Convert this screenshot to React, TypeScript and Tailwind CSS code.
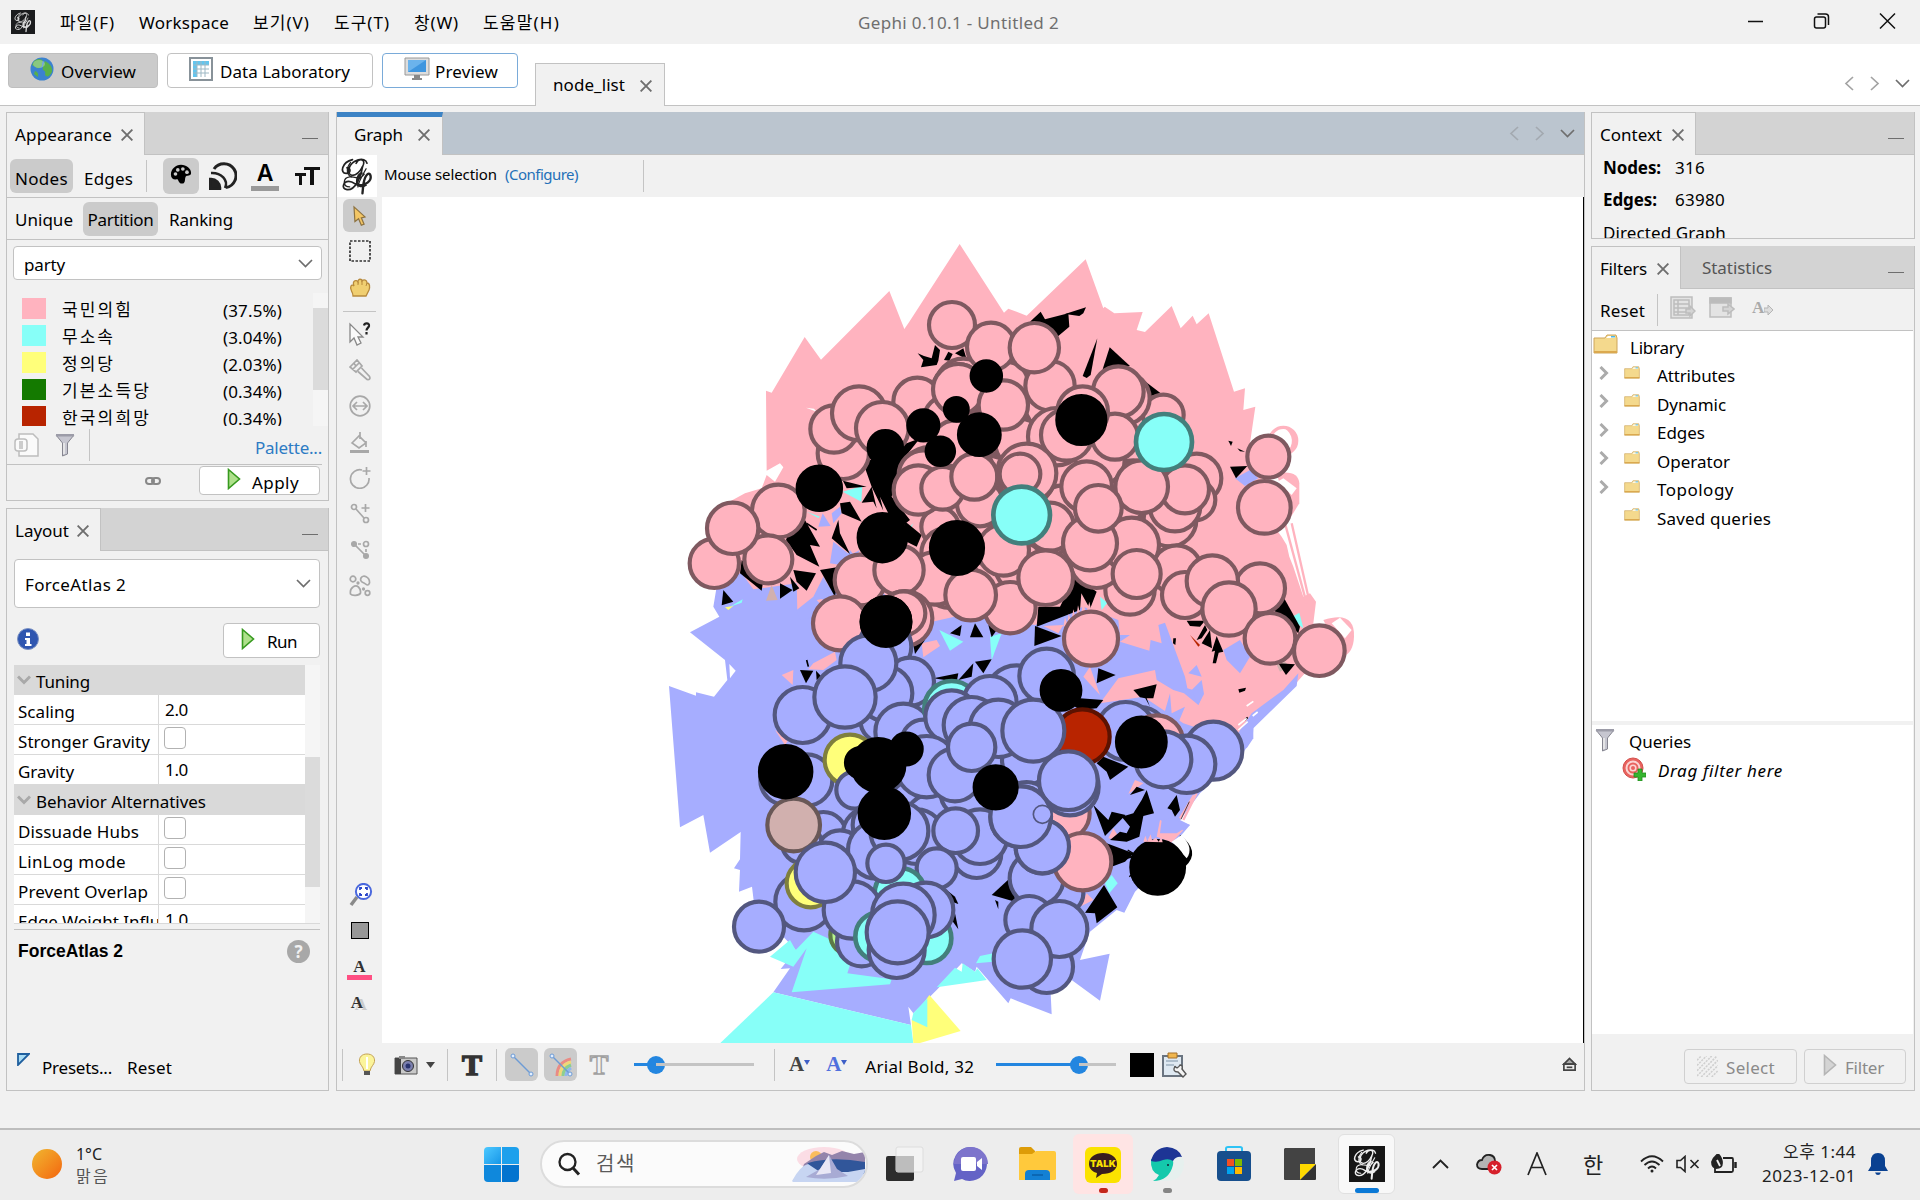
import { useLayoutEffect, useRef, useState } from "react";
import type { ReactNode } from "react";

type TProps = { w?: number; children: string; className?: string };

/* Text run that spreads its letters to occupy a fixed width. */
function T({ w, children, className = "" }: TProps) {
  const ref = useRef<HTMLSpanElement>(null);
  const [ls, setLs] = useState(0);
  useLayoutEffect(() => {
    if (!ref.current || !w) return;
    ref.current.style.letterSpacing = "0px";
    const natural = ref.current.getBoundingClientRect().width;
    setLs((w - natural) / children.length);
    ref.current.style.letterSpacing = `${(w - natural) / children.length}px`;
  }, [w, children]);
  return (
    <span ref={ref} className={`inline-block shrink-0 whitespace-pre leading-[22px] ${className}`} style={{ letterSpacing: `${ls}px` }}>
      {children}
    </span>
  );
}

const P = "#ffb3bf";
const L = "#a6adff";
const C = "#87fff8";
const Y = "#ffff7a";

const darker: Record<string, string> = {
  [P]: "#7f5960",
  [L]: "#53577f",
  [C]: "#437f7c",
  [Y]: "#7f7f3d",
  "#b82400": "#5c1200",
  "#d1b0ae": "#695857",
  "#b8f58f": "#5c7a47",
  "#000": "#000",
};

type N = [number, number, number, string];

const backNodes: N[] = [
  [1060, 600, 90, P], [1090, 620, 70, P], [1010, 600, 80, P], [1110, 640, 80, P], [1175, 900, 95, P], [1190, 880, 80, P],
  [1450, 780, 95, P], [1410, 800, 90, P], [1380, 760, 80, P], [1240, 850, 90, P], [950, 720, 85, P], [840, 745, 100, P],
  [1000, 1010, 80, P], [1110, 1010, 80, P], [940, 470, 90, P], [1070, 460, 70, P], [1350, 690, 80, P], [1130, 740, 90, P],
  [900, 1050, 90, P], [780, 1160, 65, P],
];

const pinkNodes: N[] = [
  [906, 285, 75, P], [925, 478, 82, P], [802, 515, 78, P], [895, 570, 80, P], [925, 478, 82, P], [1060, 525, 80, P],
  [1200, 467, 80, P], [1023, 350, 78, P], [1153, 353, 80, P], [580, 670, 83, P], [552, 597, 77, P], [627, 550, 87, P], [697, 595, 85, P],
  [915, 640, 75, P], [385, 843, 85, P], [193, 1000, 80, P], [355, 988, 78, P], [248, 895, 83, P],
  [870, 890, 62, P], [820, 735, 80, P], [990, 820, 75, P], [805, 780, 80, P], [878, 775, 70, P], [973, 740, 75, P],
  [890, 970, 82, P], [855, 1045, 85, P], [1060, 960, 83, P], [630, 1050, 82, P], [747, 1020, 80, P], [765, 1165, 88, P], [760, 1150, 72, P],
  [1080, 1133, 83, P], [962, 1095, 82, P], [570, 1180, 87, P],
  [1540, 555, 67, P], [1420, 505, 85, P], [1405, 485, 82, P], [1395, 620, 75, P], [1298, 545, 82, P], [1220, 620, 92, P],
  [1250, 615, 83, P], [1130, 730, 95, P], [1110, 732, 67, P], [1200, 890, 78, P], [1310, 770, 82, P], [1640, 745, 80, P], [1560, 870, 85, P],
  [1635, 810, 67, P], [1575, 828, 82, P], [1605, 778, 78, P], [1475, 770, 85, P],
  [1440, 1080, 80, P], [1580, 1020, 80, P], [1605, 1095, 75, P], [1340, 995, 85, P], [1445, 945, 88, P], [1320, 940, 87, P],
  [1345, 835, 76, P], [1460, 1032, 78, P], [1187, 1043, 88, P], [1830, 1075, 81, P], [1687, 1053, 83, P], [1737, 1137, 86, P],
  [1860, 1225, 82, P], [2008, 1262, 82, P], [1323, 1226, 87, P], [1855, 680, 69, P], [1843, 832, 85, P],
  [1542, 636, 90, C], [1115, 855, 91, C],
];

const pinkBlack: N[] = [
  [1009, 438, 50, "#000"], [919, 538, 40, "#000"], [820, 586, 51, "#000"], [871, 664, 47, "#000"], [988, 614, 67, "#000"],
  [706, 653, 56, "#000"], [508, 775, 71, "#000"], [697, 923, 77, "#000"], [921, 954, 84, "#000"], [708, 1175, 79, "#000"],
  [1294, 570, 78, "#000"],
];

/* Lower half of the network, in a frame that starts 390 px below the upper one. */
const blueNodes: N[] = [
  [705, 80, 85, L], [800, 560, 90, L], [900, 560, 85, L], [850, 610, 95, L], [1080, 500, 120, L], [1130, 420, 80, L], [1130, 560, 80, L],
  [980, 700, 80, L], [700, 300, 75, L],
  [780, 185, 78, L], [705, 220, 88, L], [655, 130, 90, L], [458, 285, 90, L], [585, 231, 98, L], [760, 335, 90, L], [820, 365, 72, L],
  [905, 265, 88, C], [1100, 230, 100, L], [1020, 248, 86, L], [905, 290, 85, L], [965, 315, 90, L], [1045, 325, 92, L], [830, 440, 98, L],
  [950, 515, 85, L], [915, 465, 85, L], [965, 382, 77, L],
  [405, 480, 80, L], [470, 480, 83, L], [600, 420, 82, Y], [615, 510, 62, L],
  [520, 645, 75, L], [655, 640, 82, L], [690, 615, 88, L], [570, 700, 75, L], [680, 690, 92, L], [800, 650, 88, L], [748, 633, 93, L],
  [990, 650, 88, L], [917, 632, 73, L], [860, 745, 66, L], [455, 670, 65, L], [431, 615, 85, "#d1b0ae"],
  [462, 845, 92, L], [482, 790, 78, Y], [750, 820, 82, C], [600, 945, 65, "#b8f58f"], [635, 965, 80, L], [607, 870, 92, L],
  [690, 950, 80, C], [830, 955, 80, C], [708, 730, 62, L],
  [526, 757, 95, L], [828, 870, 88, L], [740, 990, 90, L], [760, 885, 100, L], [743, 937, 99, L],
  [327, 920, 81, L],
  [1190, 168, 88, L], [1240, 580, 85, P], [1260, 500, 92, L],
  [1470, 345, 90, L], [1427, 333, 93, L], [1297, 350, 88, "#b82400"], [1150, 332, 99, L],
  [1520, 365, 85, P], [1690, 392, 93, L], [1610, 433, 92, L], [1540, 418, 90, L],
  [1112, 590, 97, L], [1240, 820, 66, L], [1160, 775, 87, L], [1177, 680, 86, L], [1298, 725, 92, P], [1177, 680, 86, L], [1255, 482, 94, L], [1112, 590, 97, L],
  [1138, 900, 78, L], [1190, 1040, 85, L], [1228, 927, 90, L], [1117, 1017, 92, L],
  [407, 455, 83, "#000"], [632, 428, 50, "#000"], [685, 435, 84, "#000"], [769, 387, 52, "#000"], [703, 580, 80, "#000"],
  [1037, 502, 69, "#000"], [1233, 211, 64, "#000"], [1474, 366, 79, "#000"], [1523, 742, 85, "#000"],
];

function Nodes({ list }: { list: N[] }) {
  return (
    <>
      {list.map(([x, y, r, c], i) => (
        <circle key={i} cx={x} cy={y} r={r - 6} fill={c} stroke={darker[c]} strokeWidth={c === C ? 14 : 12.5} />
      ))}
    </>
  );
}

const blackTris = [
  // upper fringe
  "803,370 822,378 845,385 855,345 870,360 865,392 860,405 813,412 820,390", "882,390 895,365 908,372 898,392", "915,370 940,355 950,388",
  "1140,275 1172,245 1185,268 1255,250 1258,290 1225,318 1180,280", "1245,252 1308,232 1300,250 1288,258", "1342,325 1322,435 1310,444 1298,438",
  "1379,352 1440,408 1358,418", "1480,450 1535,492 1500,498", "1735,632 1748,635 1743,648", "1762,655 1785,665 1770,664", "1740,710 1792,708 1758,745",
  // dark mass around the left nodes
  "640,700 770,640 810,625 750,700 725,800 780,870 740,900 690,800 700,842 665,770", "570,750 650,770 590,775 575,745",
  "570,820 600,815 635,875 575,850", "635,818 665,770 680,835 670,815", "440,840 465,870 510,950 480,945 508,1010 440,975 408,930",
  "545,925 565,870 570,910 600,972", "275,990 340,1050 335,1082 270,1030", "430,1020 498,1030 470,1082 440,1055", "510,1020 570,1010 555,1100",
  "760,870 815,915 800,950 770,935", "220,1080 250,1115 215,1126", "390,1060 428,1080 390,1106", "420,1040 448,1075 430,1085",
  // centre
  "1275,1040 1340,1085 1320,1137 1294,1090 1290,1140 1160,1190 1165,1130 1230,1130", "1155,1188 1235,1218 1153,1248",
  "1610,1172 1665,1172 1650,1190 1620,1188", "1640,1230 1665,1185 1672,1200 1655,1225", "1655,1240 1680,1200 1686,1255", "1700,1218 1720,1265 1706,1268 1698,1300 1688,1300 1695,1262 1685,1265",
  "1570,1225 1578,1225 1576,1245 1569,1240", "1900,1100 1950,1190 1945,1210 1870,1140", "1885,1300 1935,1303 1908,1335",
  "1345,1315 1397,1335 1340,1360", "1450,1380 1520,1363 1510,1405 1490,1405 1500,1430 1486,1405 1470,1402", "1765,1378 1788,1373 1785,1382 1768,1388",
  "900,1210 935,1185 930,1218", "975,1180 1000,1222 960,1222", "1015,1185 1040,1200 1025,1222", "850,1345 925,1330 920,1355", "925,1350 970,1300 965,1340", "975,1295 1025,1288 1000,1330",
  "450,1320 490,1322 468,1360", "498,1322 515,1340 500,1350", "790,1245 825,1230 795,1272",
];
const lowBlack = [
  "1230,230 1360,240 1340,265 1290,270", "1340,430 1360,410 1435,440 1380,480 1370,455", "1440,525 1460,500 1485,510",
  "1475,540 1490,510 1512,580 1480,588 1468,650 1430,665 1380,660 1410,635 1430,640 1440,620 1415,590 1450,580",
  "1330,555 1375,600 1385,575 1427,585 1365,648", "1350,700 1370,670 1450,700 1425,725 1385,740", "1305,878 1362,795 1402,862 1340,910 1335,880",
  "1025,825 1090,765 1095,845", "1250,625 1275,615 1270,640", "890,810 915,830 925,852 905,845", "905,900 915,880 925,928", "1552,565 1580,525 1590,570 1575,590 1565,570", "1035,840 1045,845 1045,868",
];
const paleBits: [string, string][] = [
  [C, "578,785 637,768 634,815"], [C, "470,845 510,860 505,864"], [C, "770,900 790,880 780,900"], [C, "1350,1100 1372,1118 1355,1140"],
  [C, "868,1200 940,1235 900,1262"], [C, "1020,1220 1055,1210 1025,1290"], [C, "1920,1165 1948,1148 1960,1195"],
  [L, "505,890 518,850 542,888"], [L, "545,850 570,830 575,850 550,880"], [L, "550,935 600,975 630,960 600,1010 540,1000"], [L, "1755,745 1800,720 1825,745 1785,768"],
  [L, "520,1040 555,1100 500,1110 535,1150 450,1170 440,1140 490,1100"], ["#d1b0ae", "365,1065 383,1110 348,1112"], [Y, "225,1132 250,1128 235,1140"], [C, "240,1130 278,1108 275,1118"],
  [P, "490,1300 555,1265 560,1290 520,1320 475,1318"], [P, "395,1335 430,1320 428,1365"], [P, "815,1240 860,1230 870,1248 820,1282"], [P, "375,1500 415,1530 405,1545"],
  [P, "1180,1188 1240,1185 1225,1210"], [P, "1320,1310 1350,1395 1300,1340"], ["#b82400", "1620,1215 1650,1245 1645,1250"], ["#d1b0ae", "1880,1305 1900,1290 1920,1310 1890,1325"],
];
const lowBits: [string, string][] = [
  [C, "1365,790 1385,765 1403,790 1378,820"], [P, "1435,522 1455,480 1480,490"], [P, "1520,650 1530,600 1600,630 1565,668"], [P, "1375,655 1390,625 1412,660"], [P, "1290,860 1310,820 1330,840"],
  [L, "1530,640 1535,600 1560,595 1620,615 1580,640"], [L, "1615,160 1640,135 1655,170"], [L, "1625,210 1655,180 1662,222 1645,255"], [L, "1540,290 1560,220 1565,280 1605,260 1580,320"],
  [L, "1720,90 1770,60 1800,110 1770,160 1730,120"],
];

function Network() {
  return (
    <svg className="block h-full w-full" viewBox="382 197 1201 846" preserveAspectRatio="none">
      <g transform="translate(650 230) scale(0.333333)">
        <polygon fill={P} points="348,482 365,488 464,321 513,389 718,183 763,297 778,275 929,42 1062,248 1075,236 1130,257 1307,88 1360,235 1364,230 1393,250 1478,246 1460,300 1485,306 1565,228 1592,295 1628,257 1640,283 1676,250 1752,485 1785,475 1780,540 1816,530 1800,640 1830,720 1880,900 1895,920 1910,945 1918,980 1930,1010 1960,1100 1980,1090 1998,1115 1990,1180 2000,1290 1920,1380 1770,1520 1650,1660 1590,1770 1560,1840 700,1500 300,1080 180,960 230,820 285,790 335,775 350,735 375,755 400,712 390,700 350,722" />
        <polygon fill="#fff" points="468,533 492,536 500,545" />
        <path d="M1905 880L1970 1120M1925 880L1975 1100" stroke={P} strokeWidth="7" />
        <circle cx="1900" cy="632" r="40" fill="#fff" stroke={P} strokeWidth="10" />
        <path d="M1895 592a40 40 0 0 1 30 72l-8-6a42 42 0 0 0-22-66" fill={P} />
        <path d="M1880 730q65-12 68 30v60l-25 40-20-50z" fill={P} />
        <polygon fill="#fff" points="1882,755 1900,745 1940,775 1925,795" />
        <path d="M2020 1170q95-30 92 50q-2 50-35 60z" fill={P} />
        <polygon fill="#fff" points="2045,1180 2070,1163 2105,1200 2085,1225" />
        <polygon fill={L} points="205,1040 275,1030 310,1078 440,1060 442,1143 500,1140 600,960 780,1190 960,1150 1155,1185 1300,1130 1405,1170 1410,1215 1440,1215 1410,1235 1498,1262 1502,1230 1535,1240 1525,1185 1545,1178 1605,1340 1612,1375 1660,1390 1645,1425 1602,1390 1570,1380 1520,1350 1515,1320 1405,1345 1350,1420 1480,1400 1600,1480 1750,1530 1805,1450 1900,1380 1945,1330 1940,1368 1810,1495 1808,1525 1785,1560 1650,1690 1590,1770 1620,1785 1590,1820 1530,1910 1455,1985 1423,2048 1400,2040 1320,2105 1302,2155 1290,2190 1379,2171 1350,2312 1265,2250 1202,2290 1205,2353 1082,2305 1075,2320 980,2210 975,2225 935,2200 860,2280 790,2350 775,2330 783,2385 370,2287 420,2215 392,2217 437,2160 400,2120 312,2020 306,1970 267,1985 270,1920 252,1915 270,1888 272,1806 180,1868 160,1755 90,1792 57,1368 138,1397 138,1387 192,1400 232,1350 225,1290 120,1207 208,1160 190,1130" />
        <polygon fill="#fff" points="238,1302 257,1322 240,1345" />
        {paleBits.map(([c, p]) => <polygon key={p} points={p} fill={c} />)}
        {blackTris.map((p) => <polygon key={p} points={p} />)}
        <path d="M1240 1190l5-28 7 20 4-30 8 22 6-36 8 30 6-42 8 30 8-40 8 35 10-36 8 36" fill={P} />
        <path d="M470 880l30 20M470 1290l5 20M1785 1470l8-8" stroke="#000" strokeWidth="5" />
      </g>
      <g transform="translate(650 620) scale(0.333333)">
        <polygon fill={C} points="210,1270 370,1117 783,1215 790,1270" />
        <polygon fill={C} points="425,1117 470,985 430,1040 360,1010 420,960 437,990 490,935 545,960 600,1035 592,1060 725,1078 720,1093" />
        <polygon fill={C} points="860,1102 915,1043 935,1055 938,1030 975,1055 982,1045 1010,1080 975,1085" />
        <polygon fill={C} points="978,1030 990,1008 1030,1000 1030,1025" />
        <polygon fill={Y} points="785,1200 838,1125 932,1233 800,1272 790,1270" />
        <polygon fill={C} points="790,1180 832,1135 832,1222 785,1200" />
        <path d="M1765 315l25-20M1765 330l28-25M1790 258l20-14M1808 288l15-12" stroke="#fff" strokeWidth="5" />
        <path d="M1600 600L1640 520M1590 595L1632 525" stroke={P} strokeWidth="7" />
        <path d="M1593 598L1618 545" stroke="#000" strokeWidth="2" />
        {lowBits.map(([c, p]) => <polygon key={p} points={p} fill={c} />)}
        {lowBlack.map((p) => <polygon key={p} points={p} />)}
        <path d="M1590 645q65 50 15 95l-25-35z" fill="#000" />
        <path d="M1565 665l30-20q38 40 15 70z" fill="#fff" />
        <polygon fill={L} points="1800,330 1810,320 1810,355 1790,385 1780,380" />
      </g>
      <g transform="translate(650 230) scale(0.333333)">
        <Nodes list={backNodes} />
        <Nodes list={pinkNodes} />
        <Nodes list={pinkBlack} />
      </g>
      <g transform="translate(650 620) scale(0.333333)">
        <Nodes list={blueNodes} />
        <circle cx="1177" cy="583" r="27" fill={L} stroke="#53577f" strokeWidth="5" />
        <path d="M1430 715l20-5-22-5 25-3-20-12M1438 770l15-15-4 22 15-15" stroke="#000" strokeWidth="4" fill="none" />
        <path d="M1480 665l6-18 6 16 10-20 4 18 12-8 8 12 8-14 4 16" fill={P} />
      </g>
      <g transform="translate(650 230) scale(0.333333)">
        <Nodes list={[[708, 1175, 79, "#000"]]} />
      </g>
    </svg>
  );
}

function GephiMark({ color, className }: { color: string; className: string }) {
  return (
    <svg viewBox="0 0 40 44" className={className} fill="none" stroke={color} strokeLinecap="round">
      <path d="M31 8C29 0 14 4 11 14C9 23 19 25 26 12C31 3 22 2 19 8" strokeWidth="1.8" />
      <path d="M15 4C3 7 1 19 8 19C14 19 13 12 9 13M26 12C24 24 18 38 9 37C2 36 5 28 11 28C18 28 22 37 30 32" strokeWidth="1.9" />
      <path d="M30 14C26 21 21 30 21 34M12 34C4 34 4 24 12 23C20 22 22 28 28 20" strokeWidth="1.4" />
      <path d="M25 19C20 21 18 31 23 32C29 32 36 28 35 22C34 17 29 19 27 31L26 41" strokeWidth="2.6" />
      <path d="M13 7C8 13 8 21 14 23" strokeWidth="1.3" />
    </svg>
  );
}

function X({ className = "" }: { className?: string }) {
  return (
    <svg viewBox="0 0 12 12" className={`h-3 w-3 shrink-0 ${className}`} stroke="#6e6e6e" strokeWidth="1.9">
      <path d="M.6 .6L11.4 11.4M11.4 .6L.6 11.4" />
    </svg>
  );
}

function Chevron({ d, color = "#6e6e6e", className = "" }: { d: "left" | "right" | "down"; color?: string; className?: string }) {
  const path = d === "left" ? "M11 2L4 8.500L11 15" : d === "right" ? "M5 2L12 8.500L5 15" : "M2 5L8.500 11.500L15 5";
  return (
    <svg viewBox="0 0 17 17" className={`h-[17px] w-[17px] shrink-0 ${className}`} fill="none" stroke={color} strokeWidth="1.7">
      <path d={path} />
    </svg>
  );
}

function Play({ gray = false, className = "" }: { gray?: boolean; className?: string }) {
  return (
    <svg viewBox="0 0 14 22" className={`h-[22px] w-3.5 shrink-0 ${className}`}>
      <path d="M1.500 1.500L12.500 11L1.500 20.500z" fill={gray ? "#d4d4d4" : "#aee08b"} stroke={gray ? "#b5b5b5" : "#379a1f"} strokeWidth="1.6" />
    </svg>
  );
}

function Folder({ className }: { className: string }) {
  return (
    <svg viewBox="0 0 25 20" className={className}>
      <path d="M1 4H12L14 1H23L24 4V19H1z" fill="#f4d98d" stroke="#cda55a" />
      <path d="M13 4L15 2H22V4z" fill="#fff" />
      <path d="M18 2h4v1.500h-4z" fill="#4bb8e8" />
      <path d="M1 17h23v2H1z" fill="#dba94f" />
    </svg>
  );
}

function Funnel({ className }: { className: string }) {
  return (
    <svg viewBox="0 0 20 24" className={className}>
      <path d="M1 2H19L12.500 10V21L7.500 23V10z" fill="#c6c6d0" stroke="#858590" />
      <path d="M1 1h18v2.500H1z" fill="#9c9ca8" />
      <path d="M9 10v11" stroke="#eee" strokeWidth="1.5" />
    </svg>
  );
}

const Sep = ({ className = "" }: { className?: string }) => <div className={`h-8 w-px shrink-0 bg-[#c4c4c4] ${className}`} />;

function PanelHead({ title, w, tab, rest, gap }: { title: string; w: number; tab: string; rest?: ReactNode; gap: string }) {
  return (
    <div className="flex h-[43px] shrink-0">
      <div className={`flex shrink-0 items-center border-r border-t border-[#c2c2c2] pl-2 ${tab} ${gap}`}>
        <T w={w} className="mt-px">{title}</T>
        <X className="mt-px" />
      </div>
      <div className="flex flex-1 items-center border-b border-[#c2c2c2] bg-[#d3d3d3]">
        {rest}
        <div className="ml-auto mr-[10px] mt-[11px] h-px w-4 bg-[#6e6e6e]" />
      </div>
    </div>
  );
}

const parties: [string, string, number, string][] = [
  ["bg-[#ffb3bf]", "국민의힘", 71, "(37.5%)"],
  ["bg-[#87fff8]", "무소속", 53, "(3.04%)"],
  ["bg-[#ffff7a]", "정의당", 53, "(2.03%)"],
  ["bg-[#147a00]", "기본소득당", 89, "(0.34%)"],
  ["bg-[#b82400]", "한국의희망", 89, "(0.34%)"],
];

function Appearance() {
  return (
    <section className="flex h-[389px] flex-col border border-t-0 border-[#c2c2c2]">
      <PanelHead title="Appearance" w={97} tab="w-[138px]" gap="gap-[9px]" />
      <div className="flex h-[43px] shrink-0 items-center border-b border-[#c2c2c2] pl-[3px]">
        <div className="flex h-[34px] w-[63px] items-center justify-center rounded-md bg-[#cbcbcb]"><T w={53} className="mt-1.5">Nodes</T></div>
        <T w={49} className="ml-[11px] mt-1.5">Edges</T>
        <Sep className="ml-[13px] mr-4" />
        <div className="flex h-9 w-9 items-center justify-center rounded-md bg-[#cbcbcb]">
          <svg viewBox="0 0 24 24" className="mb-1 h-[22px] w-[22px]"><path d="M12 2C6 2 1 7 1 12.500C1 16 3 18 6 18C8 18 8 17 9 19C10 22 12 23 15 22C17 20 16 17 17 15C18 13 23 15 23 11C23 6 18 2 12 2" /><g fill="#cbcbcb"><circle cx="6" cy="12" r="2" /><circle cx="8.500" cy="7.500" r="2" /><circle cx="14" cy="6.500" r="2" /><circle cx="18.500" cy="10" r="2" /></g></svg>
        </div>
        <svg viewBox="0 0 28 28" className="ml-2.5 h-7 w-7" fill="none" stroke="#222" strokeWidth="2.5"><path d="M5 7A12 12 0 1 1 17 25.500" strokeWidth="3" /><path d="M2 11A14 11 0 0 1 16 26" /><path d="M1 17a9 9 0 0 1 10 10H1z" fill="#222" /></svg>
        <div className="ml-3.5 flex w-7 flex-col items-center"><span className="font-['Inter'] text-[23px] font-semibold leading-[22px]">A</span><div className="mt-[2px] h-[5px] w-7 bg-[#999]" /></div>
        <svg viewBox="0 0 25 20" className="ml-4 h-5 w-[25px]"><path d="M9 1H25V4H19V19H15V4H9zM0 7H11V10H7V19H4V10H0z" fill="#111" /></svg>
      </div>
      <div className="flex h-[42px] shrink-0 items-center border-b border-[#c2c2c2] pl-2">
        <T w={58} className="mt-0.5">Unique</T>
        <div className="ml-[10px] flex h-[34px] w-[75px] items-center justify-center rounded-md bg-[#cbcbcb]"><T w={66} className="mt-0.5">Partition</T></div>
        <T w={64} className="ml-[11px] mt-0.5">Ranking</T>
      </div>
      <div className="mx-1.5 mt-1.5 flex h-[34px] shrink-0 items-center rounded border border-[#c2c2c2] bg-white pl-2.5">
        <T w={41} className="mt-1">party</T>
        <Chevron d="down" className="ml-auto mr-[7px]" />
      </div>
      <div className="mt-[13px] flex h-[133px] shrink-0 overflow-hidden">
        <div className="flex-1 pl-[15px] pt-[5px]">
          {parties.map(([c, n, w, p]) => (
            <div key={n} className="flex h-[27px] items-start">
              <div className={`h-[21px] w-6 shrink-0 ${c}`} />
              <div className="ml-4 flex w-[161px]"><T w={w} className="mt-px">{n}</T></div>
              <T w={59} className="mt-[2px]">{p}</T>
            </div>
          ))}
        </div>
        <div className="w-[15px] bg-[#f5f5f5] pt-[15px]"><div className="h-[82px] bg-[#dbdbdb]" /></div>
      </div>
      <div className="mr-1.5 flex h-[39px] shrink-0 items-center border-b border-[#c2c2c2] pl-[7px]">
        <svg viewBox="0 0 26 26" className="h-[26px] w-[26px]" fill="#fafafa" stroke="#bdbdbd" strokeWidth="1.500"><path d="M5 2h14l5 5v17H5z" /><rect x="1" y="7" width="12" height="12" rx="3" /><rect x="5" y="9" width="4" height="8" fill="#ccc" stroke="none" /></svg>
        <Funnel className="ml-[15px] h-6 w-5" />
        <Sep className="ml-[14px]" />
        <T w={67} className="ml-auto mt-1.5 text-[#2d7bc4]">Palette...</T>
      </div>
      <div className="flex h-[30px] shrink-0 items-center pr-2">
        <svg viewBox="0 0 16 10" className="ml-[138px] mt-0.5 h-2.5 w-4" fill="none" stroke="#888" strokeWidth="2"><rect x="1" y="2" width="8" height="6" rx="3" /><rect x="7" y="2" width="8" height="6" rx="3" /></svg>
        <div className="ml-auto mt-px flex h-[29px] w-[121px] items-center rounded border border-[#c2c2c2] bg-white pl-[27px]">
          <Play className="mb-1" />
          <T w={47} className="ml-[11px] mt-1">Apply</T>
        </div>
      </div>
    </section>
  );
}

function Check() {
  return <div className="mb-1 h-[22px] w-[22px] rounded border-[1.5px] border-[#b2b2b2] bg-white" />;
}

function Row({ label, w, value }: { label: string; w: number; value?: string }) {
  return (
    <div className="flex h-[30px] shrink-0 border-b border-[#d9d9d9] bg-white">
      <div className="flex w-[145px] items-center overflow-hidden border-r border-[#d9d9d9] pl-1 pt-1"><T w={w}>{label}</T></div>
      <div className="flex items-center pl-[5px]">{value ? <T w={24} className="pl-px">{value}</T> : <Check />}</div>
    </div>
  );
}

function Group({ label, w }: { label: string; w: number }) {
  return (
    <div className="flex h-[30px] shrink-0 items-center bg-[#d9d9d9] pl-[3px]">
      <svg viewBox="0 0 14 10" className="h-2.5 w-3.5" fill="none" stroke="#a9a9a9" strokeWidth="3"><path d="M1 1.500L7 7.500L13 1.500" /></svg>
      <T w={w} className="ml-[5px] mt-1">{label}</T>
    </div>
  );
}

function LayoutPanel() {
  return (
    <section className="mt-[7px] flex h-[583px] flex-col border border-t-0 border-[#c2c2c2]">
      <PanelHead title="Layout" w={54} tab="w-[94px]" gap="gap-2" />
      <div className="mx-[7px] mr-2 mt-2 flex h-[49px] shrink-0 items-center rounded border border-[#c2c2c2] bg-white pl-2.5">
        <T w={101} className="mt-0.5">ForceAtlas 2</T>
        <Chevron d="down" className="ml-auto mr-[7px]" />
      </div>
      <div className="flex h-[57px] shrink-0 items-start justify-between pl-2.5 pr-2 pt-[15px]">
        <svg viewBox="0 0 22 22" className="mt-[5px] h-[22px] w-[22px]"><circle cx="11" cy="11" r="10.500" fill="#2f56b0" stroke="#7d93c4" /><path d="M9 4.500h4v3.500H9zM8 10h5v6h1.500v2H8v-2h1.500v-4H8z" fill="#fff" /></svg>
        <div className="flex h-[35px] w-[97px] items-center rounded border border-[#c2c2c2] bg-white pl-[17px]">
          <Play className="mb-1" />
          <T w={30} className="ml-3 mt-[3px]">Run</T>
        </div>
      </div>
      <div className="ml-[7px] mr-2 flex h-[259px] shrink-0 border-b border-[#d9d9d9]">
        <div className="flex w-[291px] flex-col overflow-hidden bg-white">
          <Group label="Tuning" w={54} />
          <Row label="Scaling" w={57} value="2.0" />
          <Row label="Stronger Gravity" w={132} />
          <Row label="Gravity" w={56} value="1.0" />
          <Group label="Behavior Alternatives" w={170} />
          <Row label="Dissuade Hubs" w={121} />
          <Row label="LinLog mode" w={108} />
          <Row label="Prevent Overlap" w={130} />
          <Row label="Edge Weight Influence" w={180} value="1.0" />
        </div>
        <div className="w-[15px] bg-[#f5f5f5] pt-[92px]"><div className="h-[130px] bg-[#dbdbdb]" /></div>
      </div>
      <div className="ml-[7px] mr-2 mt-[5px] flex shrink-0 items-start border-t border-[#c2c2c2] pl-1 pr-2.5 pt-2.5">
        <span className="font-['Liberation_Sans'] text-[17.500px] font-bold leading-[22px]">ForceAtlas 2</span>
        <div className="ml-auto flex h-[23px] w-[23px] items-center justify-center rounded-full bg-[#a8a8a8] font-['Noto_Sans'] text-[17px] font-bold leading-none text-[#f1f1f1]">?</div>
      </div>
      <div className="mb-2 mt-auto flex items-center pl-2.5">
        <svg viewBox="0 0 13 13" className="mb-[16px] h-[13px] w-[13px]"><path d="M1 1H12L1 12z" fill="#a8dcf5" stroke="#1f5f9e" strokeWidth="1.800" /></svg>
        <T w={70} className="ml-3">Presets...</T>
        <T w={45} className="ml-[15px]">Reset</T>
      </div>
    </section>
  );
}

const g = { fill: "none", stroke: "#a8a8a8", strokeWidth: 1.7 } as const;

function ToolColumn() {
  return (
    <div className="flex w-[45px] shrink-0 flex-col items-center">
      <div className="mt-0.5 flex h-[33px] w-[33px] shrink-0 items-center justify-center rounded-md bg-[#cbcbcb]">
        <svg viewBox="0 0 16 24" className="h-[22px] w-[15px]"><path d="M2 2L14 13L10 14L13 21L10 22L7 15L3 18z" fill="#f3c665" stroke="#8d7240" strokeWidth="1.300" /></svg>
      </div>
      <div className="flex h-[38px] items-center"><svg viewBox="0 0 22 22" className="h-[22px] w-[22px]" fill="none"><path d="M1 1H21V21H1z" stroke="#333" strokeWidth="1.700" strokeDasharray="2.500 1.500" /></svg></div>
      <div className="flex h-9 items-center">
        <svg viewBox="0 0 22 20" className="h-5 w-[22px]"><path d="M4 18C4 13 0 12 2 8C3 6 5 8 5 8C3 3 7 1 9 4C9 0 13 1 13 3C15 1 18 2 18 5C21 5 21 9 20 12L17 18z" fill="#f0cf71" stroke="#b78a3c" strokeWidth="1.300" /><path d="M9 4v3M13 3v4M18 5l-1 3" stroke="#b78a3c" /></svg>
      </div>
      <div className="flex h-2.5 items-center"><div className="h-px w-[33px] bg-[#c4c4c4]" /></div>
      <div className="flex h-[35px] items-center">
        <svg viewBox="0 0 22 24" className="h-6 w-[22px]"><path d="M1 2V20L5 16L8 23L12 21L9 15H14z" fill="#fafafa" stroke="#888" strokeWidth="1.300" /><path d="M15 3.500C15.500 .500 20.500 .500 20 4C19.500 6 17.500 6 17.500 8.500M17.500 10v2.500" fill="none" stroke="#222" strokeWidth="2.200" /></svg>
      </div>
      <div className="mt-px flex h-9 items-center"><svg viewBox="0 0 22 22" className="h-[22px] w-[22px]" {...g}><path d="M1 8L8 1L13 7L7 13zM3.500 10.500L10.500 3.500M9 12.500L18 20.500Q22 21 20.500 17.500L12.500 9M5 4.500l2.500 3" /></svg></div>
      <div className="flex h-9 items-center"><svg viewBox="0 0 22 22" className="h-[22px] w-[22px]" {...g}><circle cx="11" cy="11" r="9.800" /><path d="M4 11H18M8 7L4 11L8 15M14 7L18 11L14 15" /></svg></div>
      <div className="flex h-9 items-center"><svg viewBox="0 0 22 22" className="h-[22px] w-[22px]" {...g}><path d="M3 12L10 5L17 12L10 17zM11 1V8M17 10v6" /><path d="M1 20.500H20" strokeWidth="3" /></svg></div>
      <div className="flex h-9 items-center"><svg viewBox="0 0 22 22" className="h-[22px] w-[22px]" {...g}><path d="M13 3A9.300 9.300 0 1 0 20 11M17.500 0V8M13.500 4H21.500" /></svg></div>
      <div className="flex h-[35px] items-center"><svg viewBox="0 0 22 22" className="h-[22px] w-[22px]" {...g}><circle cx="5" cy="4" r="2.500" /><circle cx="17" cy="17" r="2.500" /><path d="M7 6L15 15M12.500 5H20.500M16.500 1V9" /></svg></div>
      <div className="mt-px flex h-9 items-center"><svg viewBox="0 0 22 22" className="h-[22px] w-[22px]" {...g}><circle cx="5" cy="5" r="2.200" fill="#a8a8a8" /><circle cx="17" cy="5" r="2.500" /><circle cx="17" cy="17" r="2.200" fill="#a8a8a8" /><path d="M5 5L17 17M9 5h3M17 10v3" /></svg></div>
      <div className="flex h-9 items-center"><svg viewBox="0 0 22 22" className="h-[22px] w-[22px]" {...g}><circle cx="4" cy="4" r="2.800" /><path d="M12 3C14 -1 21 2 20.500 8C19 12 17 9 15 8C12 7 11 5 12 3M4 12C8 9 12 13 11.500 18C10 21 3 21 1.500 19C1 16 1 14 4 12" /><circle cx="18.500" cy="18" r="2.300" /><circle cx="9" cy="8" r=".8" /><circle cx="14.500" cy="14" r=".8" /></svg></div>
      <div className="mt-[273px] flex h-9 items-center pl-0.5"><svg viewBox="0 0 24 24" className="h-6 w-6" fill="none"><path d="M8 14L2 22" stroke="#8a8a8a" strokeWidth="3.500" /><circle cx="14.500" cy="8.500" r="7.600" fill="#fff" stroke="#4a68dd" strokeWidth="2" /><path d="M11 7V5h2M16 5h2v2M18 10v2h-2M13 12h-2v-2" stroke="#2c47c9" strokeWidth="1.800" /></svg></div>
      <div className="flex h-[35px] items-center"><div className="h-[17px] w-[18px] border border-black bg-[#989898]" /></div>
      <div className="flex h-[37px] flex-col items-center pt-[10px]"><span className="font-['Liberation_Serif'] text-[17px] font-bold leading-[17px] text-[#333]">A</span><div className="h-[5px] w-[25px] bg-[#ff4f83]" /></div>
      <div className="flex h-9 items-center pb-0.5 pr-[5px]"><span className="font-['Liberation_Serif'] text-[17px] font-bold leading-none text-[#333] [text-shadow:4px_2px_0_#ccc]">A</span></div>
    </div>
  );
}

function Slider({ fill, className = "" }: { fill: string; className?: string }) {
  return (
    <div className={`flex h-[18px] w-[120px] shrink-0 items-center ${className}`}>
      <div className={`h-[3px] bg-[#2386e0] ${fill}`} />
      <div className="-mx-[9px] h-[18px] w-[18px] shrink-0 rounded-full bg-[#2386e0]" />
      <div className="h-[3px] flex-1 bg-[#c4c4c4]" />
    </div>
  );
}

function GraphPanel() {
  return (
    <section className="flex h-[979px] w-[1249px] shrink-0 flex-col border border-t-0 border-[#c2c2c2]">
      <div className="flex h-[43px] shrink-0">
        <div className="flex w-[106px] items-center gap-[15px] border-r border-t-[5px] border-r-[#c2c2c2] border-t-[#3c83c5] pb-[3px] pl-[17px]">
          <T w={49}>Graph</T>
          <X />
        </div>
        <div className="flex flex-1 items-center justify-end border-b border-[#c2c2c2] bg-[#bbc5cf] pr-2">
          <Chevron d="left" color="#a3a9b0" className="mr-[7px]" />
          <Chevron d="right" color="#a3a9b0" className="mr-[11px]" />
          <Chevron d="down" />
        </div>
      </div>
      <div className="flex h-[42px] shrink-0 items-center">
        <div className="flex h-[42px] w-10 items-center justify-center bg-white"><GephiMark color="#222" className="h-10 w-[38px]" /></div>
        <T w={113} className="ml-[7px] mb-1 text-[15px]">Mouse selection</T>
        <T w={73} className="ml-[8px] mb-1 text-[15px] text-[#2470b8]">(Configure)</T>
        <Sep className="ml-[65px]" />
      </div>
      <div className="flex h-[846px] shrink-0">
        <ToolColumn />
        <div className="flex-1 border-r border-black bg-white"><Network /></div>
      </div>
      <div className="flex flex-1 items-center pb-1 pl-[5px]">
        <Sep />
        <svg viewBox="0 0 18 24" className="ml-[15px] h-6 w-[18px]"><path d="M9 1C4 1 1 4 1.500 8.500C2 12 5 13 6 18H12C13 13 16 12 16.500 8.500C17 4 14 1 9 1" fill="#fbf49a" stroke="#c4a254" /><path d="M9 4v12" stroke="#fff" strokeWidth="2" /><path d="M6 18h6v4H6z" fill="#555" /></svg>
        <svg viewBox="0 0 24 20" className="ml-[18px] h-5 w-6"><path d="M1 3h22v16H1z" fill="#c9c9c9" stroke="#555" /><path d="M1 3h6v16H1z" fill="#444" /><path d="M5 1h6v3H5z" fill="#888" /><circle cx="14" cy="11" r="5.500" fill="#7b7fae" stroke="#333" /><circle cx="14" cy="11" r="2.500" fill="#29336e" /></svg>
        <svg viewBox="0 0 9 6" className="ml-2 h-1.5 w-[9px]"><path d="M0 0H9L4.500 6z" fill="#444" /></svg>
        <Sep className="ml-3" />
        <span className="ml-3 w-6 text-center font-['Liberation_Serif'] text-[30px] font-bold leading-none text-[#333] [-webkit-text-stroke:1.500px_#333]">T</span>
        <Sep className="ml-3" />
        <div className="ml-2 flex h-[33px] w-[33px] items-center justify-center rounded-md bg-[#cbcbcb]"><svg viewBox="0 0 24 24" className="h-6 w-6" fill="#e3efff" stroke="#6d9bd5"><path d="M3 3L21 21" strokeWidth="1.500" /><circle cx="3" cy="3" r="2" /><circle cx="21" cy="21" r="2" /></svg></div>
        <div className="ml-1.5 flex h-[33px] w-[33px] items-center justify-center rounded-md bg-[#cbcbcb]">
          <svg viewBox="0 0 24 24" className="h-6 w-6" fill="none"><path d="M8 23C8 14 13 8 22 6" stroke="#ea8b84" strokeWidth="3" /><path d="M11 23C11 16 15 11 22 9" stroke="#f0d777" strokeWidth="3" /><path d="M14 23C14 17 17 14 22 12" stroke="#8dcf8f" strokeWidth="3" /><path d="M17 23C17 19 19 17 22 15" stroke="#8fb8ef" strokeWidth="3" /><path d="M3 3L21 21" stroke="#6d9bd5" strokeWidth="1.500" /><circle cx="3" cy="3" r="2" fill="#e3efff" stroke="#6d9bd5" /><circle cx="21" cy="21" r="2" fill="#e3efff" stroke="#6d9bd5" /></svg>
        </div>
        <span className="ml-2.5 w-6 text-center font-['Liberation_Serif'] text-[28px] font-bold leading-none text-[#f1f1f1] [-webkit-text-stroke:1.300px_#a0a0a0]">T</span>
        <Slider fill="w-[22px]" className="ml-[23px]" />
        <Sep className="ml-5" />
        <span className="ml-3.5 font-['Liberation_Serif'] text-[21px] font-bold leading-none text-[#444]">A</span>
        <svg viewBox="0 0 6 5" className="mb-1 h-[5px] w-1.5"><path d="M0 0H6L3 5z" fill="#3e5fc7" /></svg>
        <span className="ml-[16px] font-['Liberation_Serif'] text-[21px] font-bold leading-none text-[#5070dd]">A</span>
        <svg viewBox="0 0 6 5" className="mb-1 h-[5px] w-1.5"><path d="M0 0H6L3 5z" fill="#3e5fc7" /></svg>
        <T w={109} className="ml-[18px] mt-1">Arial Bold, 32</T>
        <Slider fill="w-[83px]" className="ml-[22px]" />
        <div className="ml-3.5 h-6 w-6 bg-black" />
        <svg viewBox="0 0 26 26" className="ml-[7px] h-[26px] w-[26px]"><path d="M2 4h19v20H2z" fill="#dfe9f2" stroke="#6a7480" strokeWidth="2" /><path d="M7 1h9v5H7z" fill="#f0b64e" stroke="#a5712a" /><path d="M5 9h12M5 13h8" stroke="#9fb0c0" strokeWidth="1.500" /><path d="M14 14q2 4 5-1q3 0 2 4l4 5l-3 3l-5-5q-6 0-3-6" fill="#f4f4f4" stroke="#555" strokeWidth="1.400" /></svg>
        <svg viewBox="0 0 16 16" className="ml-auto mr-[7px] h-[15px] w-[15px]" fill="#aaa" stroke="#444" strokeWidth="1.800"><path d="M2 7.500L8 1.500L14 7.500z" /><path d="M2 7.500H14V14H2z" fill="#eee" /><path d="M5 11H11" /></svg>
      </div>
    </section>
  );
}

function RightPanels() {
  const items: [string, number][] = [["Attributes", 78], ["Dynamic", 69], ["Edges", 48], ["Operator", 73], ["Topology", 77]];
  return (
    <div className="flex w-[324px] shrink-0 flex-col">
      <section className="flex h-[127px] flex-col overflow-hidden border border-t-0 border-[#c2c2c2]">
        <PanelHead title="Context" w={62} tab="w-[104px]" gap="gap-[10px]" />
        <div className="flex h-[84px] flex-col overflow-hidden pl-[11px] pt-[2px]">
          <div className="flex h-8 shrink-0 items-start"><div className="flex w-[72px]"><T w={58} className="font-bold">Nodes:</T></div><T w={30}>316</T></div>
          <div className="flex h-8 shrink-0 items-start"><div className="flex w-[72px]"><T w={54} className="font-bold">Edges:</T></div><T w={50}>63980</T></div>
          <T w={123} className="mt-px self-start">Directed Graph</T>
        </div>
      </section>
      <section className="mt-[7px] flex h-[845px] flex-col border border-t-0 border-[#c2c2c2]">
        <PanelHead title="Filters" w={47} tab="w-[89px]" gap="gap-[10px]" rest={<T w={70} className="ml-[21px] mt-0.5 text-[#555]">Statistics</T>} />
        <div className="mr-px flex h-[42px] shrink-0 items-center border-b border-[#c2c2c2] pl-2">
          <T w={45} className="mt-0.5">Reset</T>
          <Sep className="ml-[12px]" />
          <svg viewBox="0 0 26 24" className="mb-1 ml-3 h-6 w-[26px]" fill="none" stroke="#bdbdbd" strokeWidth="1.500"><path d="M1 1h21v21H1z" fill="#e3e3e3" /><path d="M4 4h15v15H4zM4 8h15M4 12h15M4 16h15M8 4v15" /><path d="M16 13h4v-3l5 5l-5 5v-3h-4z" fill="#d4d4d4" /></svg>
          <svg viewBox="0 0 26 22" className="mb-1 ml-[13px] h-[22px] w-[26px]" fill="#e3e3e3" stroke="#bdbdbd" strokeWidth="1.500"><path d="M1 1h21v19H1z" /><path d="M1 1h21v5H1z" fill="#bbb" /><path d="M14 10h5V7l6 5l-6 5v-3h-5z" fill="#d4d4d4" /></svg>
          <span className="mb-1 ml-[17px] font-['Liberation_Serif'] text-[17px] font-bold leading-none text-[#aaa]">A</span>
          <svg viewBox="0 0 10 12" className="h-3 w-2.5"><path d="M0 4h4V1l5 5l-5 5V8H0z" fill="#ddd" stroke="#b5b5b5" /></svg>
        </div>
        <div className="mr-px h-[390px] shrink-0 bg-white pt-[3px]">
          <div className="flex h-[27px] items-start pl-px"><Folder className="h-5 w-[25px]" /><T w={54} className="ml-3 mt-[3px]">Library</T></div>
          {items.map(([n, w]) => (
            <div key={n} className="flex h-[28.500px] items-center pl-[7px]">
              <svg viewBox="0 0 10 14" className="mb-[5px] h-3.5 w-[10px]" fill="none" stroke="#ababab" strokeWidth="3"><path d="M1.500 1L7.500 7L1.500 13" /></svg>
              <Folder className="mb-1.5 ml-[15px] h-[13px] w-4" />
              <T w={w} className="ml-[17px] mt-0.5">{n}</T>
            </div>
          ))}
          <div className="flex h-[28.500px] items-center pl-8"><Folder className="mb-1.5 h-[13px] w-4" /><T w={114} className="ml-[17px] mt-0.5">Saved queries</T></div>
        </div>
        <div className="h-1 shrink-0" />
        <div className="mr-px h-[309px] shrink-0 bg-white pt-[3px]">
          <div className="flex h-7 items-start pl-[3px]"><Funnel className="h-6 w-5" /><T w={62} className="ml-3.5 mt-[3px]">Queries</T></div>
          <div className="flex h-[30px] items-center pl-[30px]">
            <svg viewBox="0 0 24 24" className="mb-1 h-6 w-6"><circle cx="11" cy="11" r="10" fill="#e9635f" stroke="#d4514d" /><circle cx="11" cy="11" r="6.500" fill="none" stroke="#fbd5d3" strokeWidth="2" /><circle cx="11" cy="11" r="2.800" fill="none" stroke="#fbd5d3" strokeWidth="1.600" /><path d="M16 12h4v4h4v4h-4v4h-4v-4h-4v-4h4z" fill="#36b52f" stroke="#258a20" strokeWidth=".8" /></svg>
            <T w={125} className="ml-3 italic">Drag filter here</T>
          </div>
        </div>
        <div className="flex flex-1 items-start justify-end gap-[7px] pr-2 pt-[15px]">
          <div className="flex h-[35px] w-[113px] items-center rounded border-[1.5px] border-[#d0d0d0] pl-3">
            <svg viewBox="0 0 20 20" className="h-[21px] w-[21px]" stroke="#cfcfcf" strokeWidth="1.500" strokeDasharray="2 1"><path d="M0 4L4 0M0 9L9 0M0 14L14 0M0 19L19 0M4 20L20 4M9 20L20 9M14 20L20 14" /></svg>
            <T w={49} className="ml-[8px] mt-0.5 text-[#8a8a8a]">Select</T>
          </div>
          <div className="flex h-[35px] w-[102px] items-center rounded border-[1.5px] border-[#d0d0d0] pl-[18px]">
            <Play gray className="mb-1" />
            <T w={39} className="ml-2 mt-0.5 text-[#8a8a8a]">Filter</T>
          </div>
        </div>
      </section>
    </div>
  );
}

function Taskbar() {
  return (
    <footer className="flex h-[72px] items-center border-t-2 border-[#bdbdbd] bg-[#ededed] pb-0.5">
      <div className="ml-8 h-[30px] w-[30px] shrink-0 rounded-full bg-linear-to-br from-[#efb62f] to-[#f2630d]" />
      <div className="ml-3.5 flex w-[408px] flex-col items-start pt-px"><T w={26} className="text-[16px] text-[#222]">1°C</T><T w={34} className="text-[16px] text-[#555]">맑음</T></div>
      <div className="grid h-[35px] w-[35px] shrink-0 grid-cols-2 gap-px"><div className="rounded-tl-sm bg-linear-to-br from-[#4cc9ff] to-[#1297e8]" /><div className="rounded-tr-sm bg-[#1da0ec]" /><div className="rounded-bl-sm bg-[#0f88dc]" /><div className="rounded-br-sm bg-[#0374cf]" /></div>
      <div className="ml-[21px] flex h-12 w-[328px] shrink-0 items-center overflow-hidden rounded-full border-2 border-[#dcdcdc] bg-[#fbfbfb] pl-[15px]">
        <svg viewBox="0 0 24 24" className="h-6 w-6" fill="none" stroke="#222" strokeWidth="2.300"><circle cx="10.500" cy="10" r="8" /><path d="M16 16L22 22.500" strokeWidth="3" /></svg>
        <T w={40} className="ml-[15px] text-[20px] text-[#5a5a5a]">검색</T>
        <svg viewBox="0 0 74 36" className="ml-auto h-9 w-[74px]"><ellipse cx="32" cy="13" rx="27" ry="12" fill="#fbdde5" /><circle cx="24" cy="11" r="6" fill="#fbbd5c" /><path d="M12 18L24 10L32 6L40 9L50 5L62 8L73 6V24H10z" fill="#9484ab" /><path d="M16 17Q40 10 73 16V28H10z" fill="#31569a" /><path d="M0 35Q8 20 16 18L28 26H56L73 23V36H1z" fill="#c7d5f2" /><path d="M14 31L28 23L37 9L45 23L56 30Q34 35 14 31" fill="#a8abd4" /><path d="M28 23L37 9L39 27L24 29z" fill="#e9e7f5" /></svg>
      </div>
      <svg viewBox="0 0 38 36" className="ml-[18px] h-9 w-[38px] shrink-0"><rect x="0" y="10" width="28" height="25" rx="2" fill="#2c2c2c" /><rect x="10" y="1" width="27" height="25" rx="2" fill="#f4f4f4" fillOpacity=".8" stroke="#ddd" /><path d="M10 10H28V26H10z" fill="#bdbdbd" /></svg>
      <svg viewBox="0 0 36 36" className="ml-[29px] h-9 w-9 shrink-0"><path d="M18 1A17 17 0 1 1 9 33L1 35L3 27A17 17 0 0 1 18 1" fill="#6463c6" /><path d="M1 18A17 17 0 0 1 18 1A17 17 0 0 1 35 18z" fill="#7d74cc" /><rect x="8" y="11" width="15" height="14" rx="2" fill="#fff" /><path d="M24 16L29 12V24L24 20z" fill="#fff" /></svg>
      <svg viewBox="0 0 38 36" className="ml-[29px] h-9 w-[38px] shrink-0"><path d="M1 3q0-2 2-2h10l4 4v8H1z" fill="#dd9c08" /><path d="M1 8H14L18 5H36q2 0 2 2V33q0 1-2 1H1z" fill="#ffc93c" /><path d="M7 34v-6q0-4 4-4h17q4 0 4 4v6z" fill="#1380d4" /><path d="M14 29h11" stroke="#0a5fa8" strokeWidth="1.500" /></svg>
      <div className="ml-[17px] flex h-[60px] w-[60px] shrink-0 flex-col items-center rounded-md bg-[#ffe4e4] pt-[13px]">
        <div className="flex h-9 w-9 shrink-0 items-center justify-center rounded-md bg-[#fbe200]"><svg viewBox="0 0 30 28" className="h-7 w-[30px]"><path d="M15 2C7 2 1 6 1 13C1 18 5 21 9 22L8 27L14 23C23 23 29 19 29 13C29 6 23 2 15 2" fill="#3a1e1f" /><text x="15" y="16" fontSize="9.500" fontWeight="900" textAnchor="middle" fill="#fbe200" fontFamily="Inter, sans-serif">TALK</text></svg></div>
        <div className="mt-[5px] h-[5px] w-[9px] rounded-full bg-[#c4271b]" />
      </div>
      <div className="ml-[14px] flex h-[60px] w-[40px] shrink-0 flex-col items-center pt-[12px]">
        <svg viewBox="0 0 36 36" className="h-9 w-9 shrink-0"><path d="M5 35Q12 32 16 22L24 12Q34 8 35 16Q35 34 18 35z" fill="#e6f0ee" /><path d="M2 13Q1 26 10 29Q8 33 4 35Q20 35 24 19Q25 14 22 12z" fill="#14c9ac" /><path d="M2 15Q5 2 18 1Q30 2 33 11Q27 10 24 15Q20 12 14 14Q8 17 2 15" fill="#1d3595" /><circle cx="19" cy="19" r="1" fill="#123" /></svg>
        <div className="mt-[6px] h-[5px] w-[9px] rounded-full bg-[#858585]" />
      </div>
      <svg viewBox="0 0 36 36" className="ml-[29px] h-9 w-9 shrink-0"><path d="M10 6V2.500Q10 1 12 1H24Q26 1 26 2.500V6" fill="none" stroke="#2ec3f5" strokeWidth="2" /><rect x="1" y="5" width="34" height="30" rx="4" fill="#174f8d" /><path d="M11 13h7v7h-7z" fill="#f25022" /><path d="M19 13h7v7h-7z" fill="#7fba00" /><path d="M11 21h7v7h-7z" fill="#00a4ef" /><path d="M19 21h7v7h-7z" fill="#ffb900" /></svg>
      <svg viewBox="0 0 32 32" className="ml-8 h-8 w-8 shrink-0"><path d="M1 0h30v16L16 32H1q-1 0-1-1V1z" fill="#434343" /><path d="M16 16H32L16 32z" fill="#ffd900" /><path d="M32 16L16 32H31q1 0 1-1z" fill="#333" /></svg>
      <div className="ml-[22px] flex h-[60px] w-[57px] shrink-0 flex-col items-center rounded-md border border-[#e0e0e0] bg-[#f8f8f8] pt-[11px]">
        <div className="flex h-9 w-9 shrink-0 items-center justify-center bg-[#161616]"><GephiMark color="#eee" className="h-[34px] w-8" /></div>
        <div className="mt-[6px] h-[5px] w-6 rounded-full bg-[#0b79d6]" />
      </div>
      <svg viewBox="0 0 17 10" className="ml-[37px] h-2.5 w-[17px] shrink-0" fill="none" stroke="#222" strokeWidth="1.900"><path d="M1 9L8.500 1.500L16 9" /></svg>
      <svg viewBox="0 0 26 22" className="ml-[27px] h-[22px] w-[26px] shrink-0"><path d="M6 16Q1 16 1 11.500Q2 7 6 7Q8 1 14 2Q19 3 19 8L12 16z" fill="#b4b4b4" stroke="#222" strokeWidth="1.800" /><circle cx="18.500" cy="14.500" r="7" fill="#d6202b" /><path d="M16 12L21 17M21 12L16 17" stroke="#fff" strokeWidth="1.700" /></svg>
      <svg viewBox="0 0 20 24" className="ml-[25px] h-6 w-5 shrink-0" fill="none" stroke="#222" strokeWidth="1.700"><path d="M1 23L10 1L19 23M4.500 15.500H15.500" /></svg>
      <T w={22} className="ml-[36px] text-[22px] text-[#222]">한</T>
      <svg viewBox="0 0 24 18" className="ml-[35px] h-[18px] w-6 shrink-0" fill="none" stroke="#222" strokeWidth="1.800"><path d="M1 6.500Q12 -4 23 6.500M4.500 10Q12 3 19.500 10M8 13.500Q12 9.500 16 13.500" /><circle cx="12" cy="16" r="1.500" fill="#222" stroke="none" /></svg>
      <svg viewBox="0 0 24 18" className="ml-3 h-[18px] w-6 shrink-0" fill="none" stroke="#222" strokeWidth="1.600"><path d="M1 5.500H4.500L9 1.500V16.500L4.500 12.500H1zM14.500 5L22.500 13M22.500 5L14.500 13" /></svg>
      <svg viewBox="0 0 26 20" className="ml-[11px] h-5 w-[26px] shrink-0" fill="none" stroke="#222" strokeWidth="1.800"><path d="M12 4H21Q22 4 22 5.500V16.500Q22 18 20.500 18H4V14" /><path d="M24.500 8v6" strokeWidth="2.500" /><path d="M7 0Q2 4 1 8Q1 13 5 14Q11 14 11 9Q11 4 7 0" fill="#222" /><path d="M6 6L9 12" stroke="#eee" /></svg>
      <div className="ml-[25px] flex w-[94px] flex-col items-end pb-px"><T w={73} className="leading-[24px] text-[#222]">오후 1:44</T><T w={94} className="leading-[24px] text-[#222]">2023-12-01</T></div>
      <svg viewBox="0 0 20 24" className="ml-3 h-6 w-5 shrink-0" fill="#0a4191"><path d="M10 1Q3 1 3 9V14L0 19H20L17 14V9Q17 1 10 1M7 20.500h6Q12 23 10 23T7 20.500" /></svg>
    </footer>
  );
}

export default function App() {
  return (
    <div className="flex h-[1200px] w-[1920px] flex-col overflow-hidden bg-[#f1f1f1] font-['Noto_Sans','Noto_Sans_CJK_KR',sans-serif] text-[17px] text-black">
      <header className="flex h-[44px] shrink-0 items-center pl-[11px] pt-0.5">
        <div className="mb-0.5 flex h-6 w-6 items-center justify-center bg-[#1b1c1e]"><GephiMark color="#ddd" className="h-[22px] w-5" /></div>
        <T w={55} className="ml-[25px]">파일(F)</T>
        <T w={90} className="ml-6">Workspace</T>
        <T w={57} className="ml-6">보기(V)</T>
        <T w={56} className="ml-6">도구(T)</T>
        <T w={45} className="ml-6">창(W)</T>
        <T w={77} className="ml-6">도움말(H)</T>
        <T w={201} className="ml-[298px] text-[#6f6f6f]">Gephi 0.10.1 - Untitled 2</T>
        <svg viewBox="0 0 148 18" className="mb-1 ml-auto mr-6 h-[18px] w-[148px]" fill="none" stroke="#111" strokeWidth="1.500"><path d="M0 9.500H15M132 1.500L147 16.500M147 1.500L132 16.500" /><rect x="66.500" y="5" width="11" height="11" rx="2" /><path d="M69.500 2H77.500Q80.500 2 80.500 5V13" /></svg>
      </header>
      <div className="flex h-[62px] shrink-0 bg-white">
        <div className="flex w-[535px] items-start gap-[9px] border-b border-[#c2c2c2] pl-2 pt-[9px]">
          <div className="flex h-[35px] w-[150px] items-center rounded border border-[#bfbfbf] bg-[#cbcbcb] pl-[21px]">
            <svg viewBox="0 0 24 24" className="mb-1 h-6 w-6"><circle cx="12" cy="12" r="11.500" fill="#3b82d0" /><path d="M4 4Q10 0 13 4Q11 6 12 9Q9 12 7 11L2 8zM15 4Q23 8 22 15Q18 22 15 18Q16 14 13 13Q12 9 15 4M5 14Q9 15 8 20L4 17z" fill="#58b04a" /><ellipse cx="9" cy="7" rx="6" ry="4" fill="#fff" opacity=".3" /></svg>
            <T w={75} className="ml-[7px] mt-[3px]">Overview</T>
          </div>
          <div className="flex h-[35px] w-[206px] items-center rounded border border-[#c2c2c2] bg-white pl-[21px]">
            <svg viewBox="0 0 24 24" className="mb-1 h-6 w-6"><path d="M1 1h22v22H1z" fill="#fff" stroke="#889299" strokeWidth="2" /><path d="M4 4h16v4H4zM4 4h4v16H4z" fill="#63c5ee" /><path d="M4 8h16M4 12h16M4 16h16M8 4v16M12 4v16M16 4v16" stroke="#9db8c4" /></svg>
            <T w={130} className="ml-[7px] mt-[3px]">Data Laboratory</T>
          </div>
          <div className="flex h-[35px] w-[136px] items-center rounded border border-[#7aabd9] bg-white pl-[21px]">
            <svg viewBox="0 0 26 24" className="mb-1 h-6 w-[26px]"><path d="M1 1h24v17H1z" fill="#ddd" stroke="#999" /><path d="M4 3h18v12H4z" fill="#3f96df" /><path d="M4 15L22 3H4z" fill="#6bb3ec" /><path d="M10 18h6v3h2v2H8v-2h2z" fill="#888" /></svg>
            <T w={63} className="ml-[5px] mt-[3px]">Preview</T>
          </div>
        </div>
        <div className="mt-[19px] flex w-[130px] items-center border border-b-0 border-[#c2c2c2] bg-[#f1f1f1] pl-[17px]"><T w={72}>node_list</T><X className="ml-[15px] mt-0.5" /></div>
        <div className="flex flex-1 items-end justify-end border-b border-[#c2c2c2] pb-[13px] pr-[9px]">
          <Chevron d="left" color="#a3a3a3" className="mr-[7px]" />
          <Chevron d="right" color="#a3a3a3" className="mr-[11px]" />
          <Chevron d="down" />
        </div>
      </div>
      <main className="flex h-[1022px] shrink-0 pl-1.5 pt-1.5">
        <div className="mr-[7px] flex w-[323px] shrink-0 flex-col"><Appearance /><LayoutPanel /></div>
        <GraphPanel />
        <div className="w-1.5 shrink-0" />
        <RightPanels />
      </main>
      <Taskbar />
    </div>
  );
}
